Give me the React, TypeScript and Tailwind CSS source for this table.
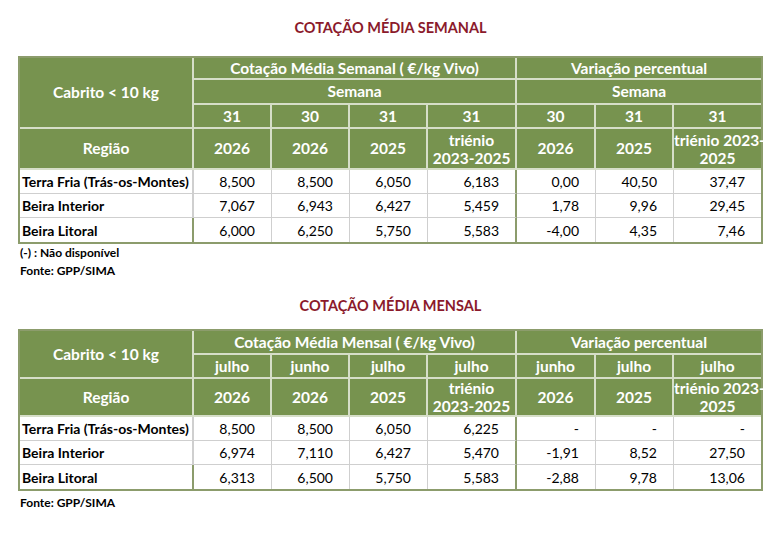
import React from "react";

type Row = { regiao: string; values: string[] };

const semanal: Row[] = [
  { regiao: "Terra Fria (Trás-os-Montes)", values: ["8,500", "8,500", "6,050", "6,183", "0,00", "40,50", "37,47"] },
  { regiao: "Beira Interior", values: ["7,067", "6,943", "6,427", "5,459", "1,78", "9,96", "29,45"] },
  { regiao: "Beira Litoral", values: ["6,000", "6,250", "5,750", "5,583", "-4,00", "4,35", "7,46"] },
];

const mensal: Row[] = [
  { regiao: "Terra Fria (Trás-os-Montes)", values: ["8,500", "8,500", "6,050", "6,225", "-", "-", "-"] },
  { regiao: "Beira Interior", values: ["6,974", "7,110", "6,427", "5,470", "-1,91", "8,52", "27,50"] },
  { regiao: "Beira Litoral", values: ["6,313", "6,500", "5,750", "5,583", "-2,88", "9,78", "13,06"] },
];

const th = "border-r-2 border-b-2 border-[#d6dec8] bg-[#77934f] p-0 text-center align-middle text-[15.5px] font-bold leading-[17px] text-white";
const thLast = "border-b-2 border-[#d6dec8] bg-[#77934f] p-0 text-center align-middle text-[15.5px] font-bold leading-[17px] text-white";

function Cols() {
  return (
    <colgroup>
      <col className="w-[174px]" />
      <col className="w-[78px]" />
      <col className="w-[78px]" />
      <col className="w-[78px]" />
      <col className="w-[89px]" />
      <col className="w-[79px]" />
      <col className="w-[78px]" />
      <col className="w-[87px]" />
    </colgroup>
  );
}

function Body({ rows }: { rows: Row[] }) {
  return (
    <tbody>
      {rows.map((r, i) => {
        const last = i === rows.length - 1;
        const line = last ? "" : "border-b border-[#cfcfcf]";
        return (
          <tr key={r.regiao} className="h-[24px]">
            <td className={`border-r-2 border-[#8c9c6c] pl-[2px] text-[14px] font-bold whitespace-nowrap text-black ${line}`}>
              {r.regiao}
            </td>
            {r.values.map((v, j) => {
              const divider =
                j === 3 ? "border-r-2 border-r-[#8c9c6c]" : j === 6 ? "" : "border-r border-r-[#cfcfcf]";
              return (
                <td
                  key={j}
                  className={`pr-[16px] text-right text-[14px] text-black ${divider} ${line} ${last ? "" : "border-b-[#cfcfcf]"}`}
                >
                  {v}
                </td>
              );
            })}
          </tr>
        );
      })}
    </tbody>
  );
}

function Title({ children }: { children: React.ReactNode }) {
  return (
    <p className="text-center text-[14.5px] font-bold leading-[18px] text-[#8b1a2b]">{children}</p>
  );
}

function Note({ children }: { children: React.ReactNode }) {
  return <p className="pl-[2px] text-[12px] font-bold leading-[18px] text-black">{children}</p>;
}

export default function App() {
  return (
    <div
      className="h-[533px] w-[780px] bg-white pl-[18px] pr-[17px] pt-[19px]"
      style={{ fontFamily: "Lato, 'Open Sans', sans-serif" }}
    >
      <Title>COTAÇÃO MÉDIA SEMANAL</Title>

      {/* Semanal */}
      <div className="mt-[19px] border-2 border-[#8c9c6c]">
        <table className="w-full table-fixed border-separate border-spacing-0">
          <Cols />
          <thead>
            <tr className="h-[22px]">
              <th rowSpan={3} className={th}>Cabrito &lt; 10 kg</th>
              <th colSpan={4} className={th}>Cotação Média Semanal ( €/kg Vivo)</th>
              <th colSpan={3} className={thLast}>Variação percentual</th>
            </tr>
            <tr className="h-[25px]">
              <th colSpan={4} className={th}>Semana</th>
              <th colSpan={3} className={thLast}>Semana</th>
            </tr>
            <tr className="h-[24px]">
              <th className={th}>31</th>
              <th className={th}>30</th>
              <th className={th}>31</th>
              <th className={th}>31</th>
              <th className={th}>30</th>
              <th className={th}>31</th>
              <th className={thLast}>31</th>
            </tr>
            <tr className="h-[41px]">
              <th className={`${th} border-b-0`}>Região</th>
              <th className={`${th} border-b-0`}>2026</th>
              <th className={`${th} border-b-0`}>2026</th>
              <th className={`${th} border-b-0`}>2025</th>
              <th className={`${th} border-b-0 leading-[18px]`}>
                triénio
                <br />
                2023-2025
              </th>
              <th className={`${th} border-b-0`}>2026</th>
              <th className={`${th} border-b-0`}>2025</th>
              <th className={`${thLast} border-b-0 whitespace-nowrap leading-[18px]`}>
                triénio 2023-
                <br />
                2025
              </th>
            </tr>
          </thead>
          <Body rows={semanal} />
        </table>
      </div>

      <Note>(-) : Não disponível</Note>
      <Note>Fonte: GPP/SIMA</Note>

      <div className="mt-[17px]">
        <Title>COTAÇÃO MÉDIA MENSAL</Title>
      </div>

      {/* Mensal */}
      <div className="mt-[14px] border-2 border-[#8c9c6c]">
        <table className="w-full table-fixed border-separate border-spacing-0">
          <Cols />
          <thead>
            <tr className="h-[24px]">
              <th rowSpan={2} className={th}>Cabrito &lt; 10 kg</th>
              <th colSpan={4} className={th}>Cotação Média Mensal ( €/kg Vivo)</th>
              <th colSpan={3} className={thLast}>Variação percentual</th>
            </tr>
            <tr className="h-[24px]">
              <th className={th}>julho</th>
              <th className={th}>junho</th>
              <th className={th}>julho</th>
              <th className={th}>julho</th>
              <th className={th}>junho</th>
              <th className={th}>julho</th>
              <th className={thLast}>julho</th>
            </tr>
            <tr className="h-[37px]">
              <th className={`${th} border-b-0`}>Região</th>
              <th className={`${th} border-b-0`}>2026</th>
              <th className={`${th} border-b-0`}>2026</th>
              <th className={`${th} border-b-0`}>2025</th>
              <th className={`${th} border-b-0 leading-[18px]`}>
                triénio
                <br />
                2023-2025
              </th>
              <th className={`${th} border-b-0`}>2026</th>
              <th className={`${th} border-b-0`}>2025</th>
              <th className={`${thLast} border-b-0 whitespace-nowrap leading-[18px]`}>
                triénio 2023-
                <br />
                2025
              </th>
            </tr>
          </thead>
          <Body rows={mensal} />
        </table>
      </div>

      <div className="mt-[3px]">
        <Note>Fonte: GPP/SIMA</Note>
      </div>
    </div>
  );
}
